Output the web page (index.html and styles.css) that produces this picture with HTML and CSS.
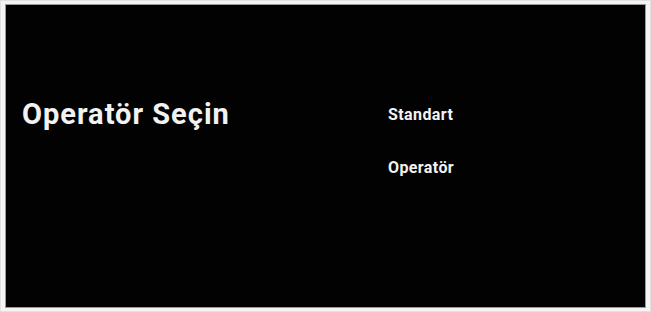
FILE: index.html
```html
<!DOCTYPE html>
<html lang="tr">
<head>
<meta charset="utf-8">
<link rel="stylesheet" href="styles.css">
</head>
<body>
<div class="frame">
  <div class="screen">
    <h1 class="title">Operatör Seçin</h1>
    <ul class="options">
      <li class="option">Standart</li>
      <li class="option">Operatör</li>
    </ul>
  </div>
</div>
</body>
</html>
```

FILE: styles.css
```css
html, body {
  margin: 0;
  padding: 0;
  background: #ffffff;
}
.frame {
  width: 651px;
  height: 312px;
  box-sizing: border-box;
  padding: 2px 3px;
  background: #f4f4f4;
  border: 1px solid #e0e0e0;
}
.screen {
  box-sizing: border-box;
  height: 304px;
  margin: 1px 1px;
  background: #020202;
  border: 1px solid #9a9a9a;
  display: flex;
  font-family: Roboto, "Liberation Sans", sans-serif;
  color: #f2f2f2;
}
.title {
  margin: 0;
  width: 366px;
  padding: 89px 0 0 16px;
  box-sizing: border-box;
  font-size: 29px;
  font-weight: 700;
  letter-spacing: 1px;
  line-height: 40px;
  height: fit-content;
}
.options {
  list-style: none;
  margin: 0;
  padding: 100px 0 0 16px;
  display: flex;
  flex-direction: column;
  gap: 33px;
}
.option {
  font-size: 16px;
  font-weight: 700;
  letter-spacing: 0.4px;
  line-height: 20px;
}
```
